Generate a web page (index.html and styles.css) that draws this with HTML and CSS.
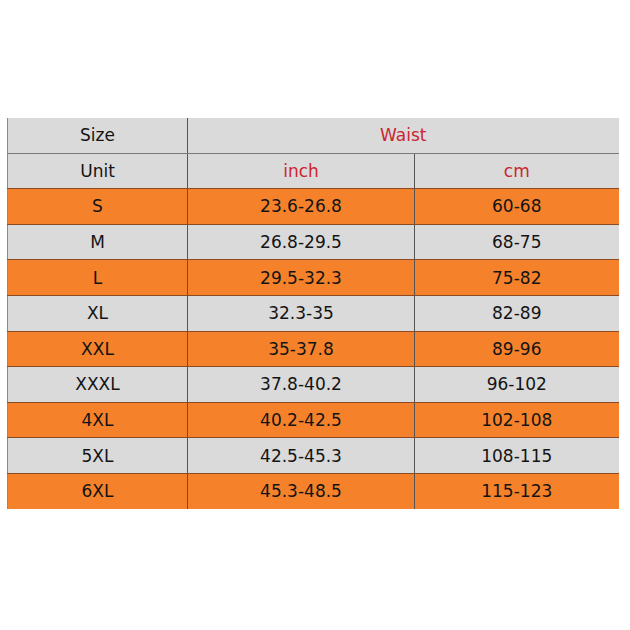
FILE: index.html
```html
<!DOCTYPE html>
<html>
<head>
<meta charset="utf-8">
<link rel="stylesheet" href="styles.css">
</head>
<body>
<table class="size-table">
  <colgroup>
    <col class="c1"><col class="c2"><col class="c3">
  </colgroup>
  <tr class="grey"><td>Size</td><td colspan="2" class="red">Waist</td></tr>
  <tr class="grey"><td>Unit</td><td class="red">inch</td><td class="red">cm</td></tr>
  <tr class="orange"><td>S</td><td>23.6-26.8</td><td>60-68</td></tr>
  <tr class="grey"><td>M</td><td>26.8-29.5</td><td>68-75</td></tr>
  <tr class="orange"><td>L</td><td>29.5-32.3</td><td>75-82</td></tr>
  <tr class="grey"><td>XL</td><td>32.3-35</td><td>82-89</td></tr>
  <tr class="orange"><td>XXL</td><td>35-37.8</td><td>89-96</td></tr>
  <tr class="grey"><td>XXXL</td><td>37.8-40.2</td><td>96-102</td></tr>
  <tr class="orange"><td>4XL</td><td>40.2-42.5</td><td>102-108</td></tr>
  <tr class="grey"><td>5XL</td><td>42.5-45.3</td><td>108-115</td></tr>
  <tr class="orange"><td>6XL</td><td>45.3-48.5</td><td>115-123</td></tr>
</table>
</body>
</html>
```
FILE: styles.css
```css
html, body {
  margin: 0;
  padding: 0;
  background: #ffffff;
}
body {
  padding: 118px 0 0 7px;
  font-family: "DejaVu Sans", Verdana, sans-serif;
}
.size-table {
  border-collapse: collapse;
  width: 611px;
  table-layout: fixed;
  font-size: 17px;
  color: #141414;
  border-left: 1px solid #8a8a8a;
}
.c1 { width: 180px; }
.c2 { width: 227px; }
.c3 { width: 204px; }
.size-table td {
  height: 34.6px;
  padding: 0;
  text-align: center;
  vertical-align: middle;
  border-bottom: 1px solid #7a7a7a;
  border-right: 1px solid #555555;
  line-height: 20px;
}
.size-table td:last-child { border-right: none; }
.size-table tr:last-child td { border-bottom: none; }
.grey td { background: #dadada; }
.orange td {
  background: #f5822b;
  border-bottom-color: #8a4a22;
}
.size-table tr.grey:has(+ .orange) td { border-bottom-color: #8a4a22; }
.red { color: #cc2530; }
```
